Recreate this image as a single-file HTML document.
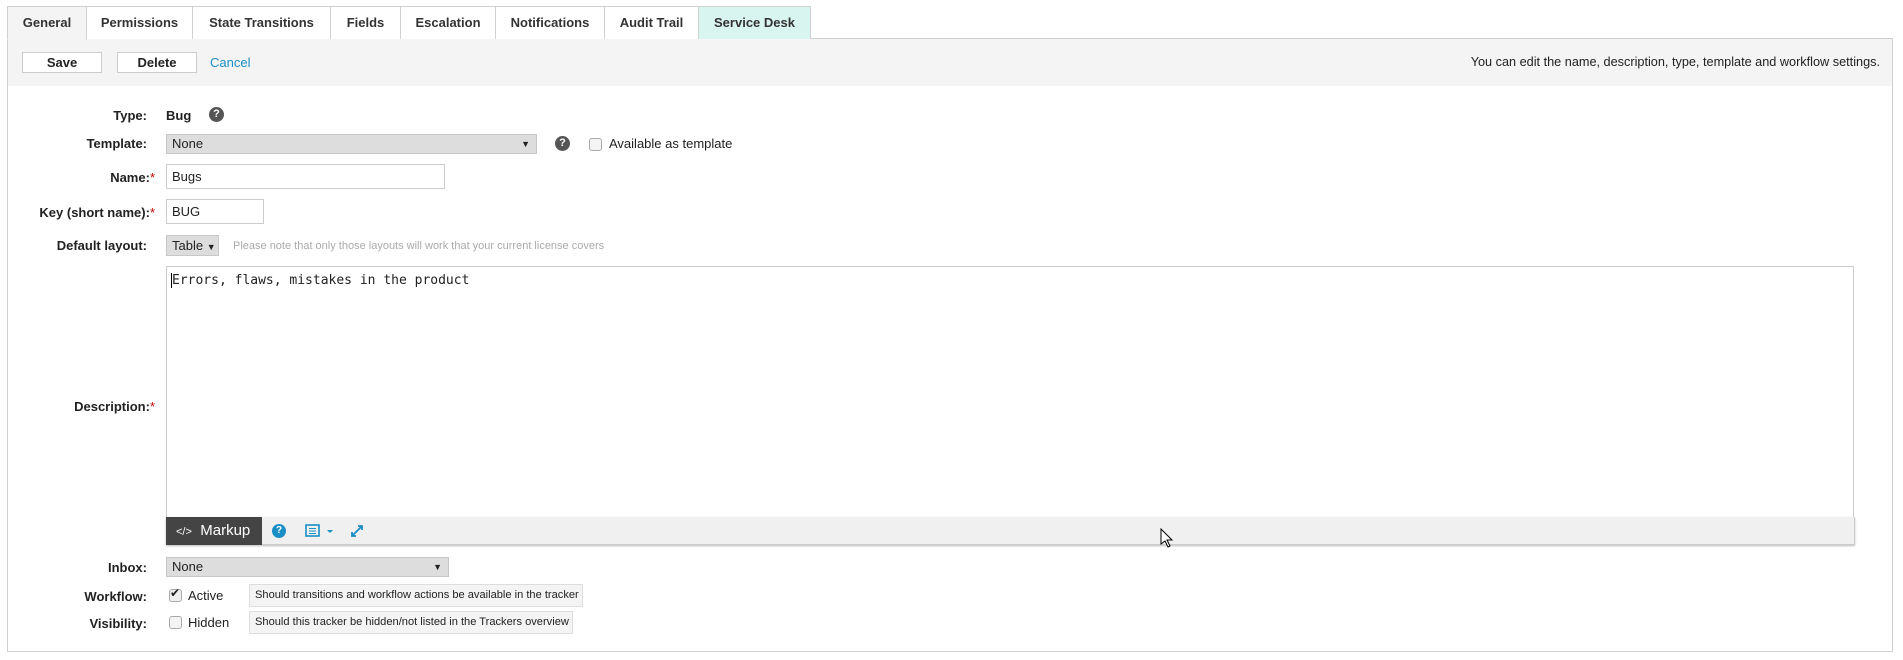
<!DOCTYPE html>
<html><head><meta charset="utf-8"><style>
*{box-sizing:border-box}
body{margin:0;width:1903px;height:660px;background:#fff;font-family:"Liberation Sans",Arial,sans-serif;font-size:13px;color:#222;position:relative;overflow:hidden}
.a{position:absolute}
.tab{position:absolute;top:6px;height:33px;border:1px solid #d0d0d0;border-bottom:none;background:#fff;font-weight:bold;font-size:13px;text-align:center;line-height:31px;color:#333}
.box{position:absolute;left:7px;top:38px;width:1886px;height:614px;border:1px solid #d0d0d0}
.tb{position:absolute;left:8px;top:39px;width:1884px;height:47px;background:#f4f4f4}
.btn{position:absolute;top:52px;height:21px;border:1px solid #ccc;background:#fff;font-weight:bold;text-align:center;line-height:19px}
.lbl{position:absolute;right:1756px;font-weight:bold;white-space:nowrap}
.req{color:#c00;font-weight:normal}
.sel{position:absolute;background:#ddd;border:1px solid #c8c8c8;padding-left:5px}
.inp{position:absolute;border:1px solid #ccc;background:#fff;padding-left:5px}
.help{position:absolute;width:15px;height:15px;border-radius:50%;background:#555;color:#fff;font-size:11px;font-weight:bold;text-align:center;line-height:15px}
.cb{position:absolute;width:13px;height:13px;border:1px solid #aaa;border-radius:3px;background:#f4f4f4}
.hint{position:absolute;left:249px;height:23px;border:1px solid #ddd;background:#f4f4f4;font-size:11.1px;line-height:21px;padding-left:5px;white-space:nowrap}
</style></head><body>
<div class="box"></div>
<div class="tb"></div>
<div class="tab" style="left:7px;width:80px;background:#f4f4f4;border-bottom:1px solid #f4f4f4;height:34px">General</div>
<div class="tab" style="left:86px;width:107px">Permissions</div>
<div class="tab" style="left:192px;width:139px">State Transitions</div>
<div class="tab" style="left:330px;width:71px">Fields</div>
<div class="tab" style="left:400px;width:96px">Escalation</div>
<div class="tab" style="left:495px;width:110px">Notifications</div>
<div class="tab" style="left:604px;width:95px">Audit Trail</div>
<div class="tab" style="left:698px;width:113px;background:#d9f5ef">Service Desk</div>
<div class="btn" style="left:22px;width:80px">Save</div>
<div class="btn" style="left:117px;width:80px">Delete</div>
<div class="a" style="left:210px;top:55px;color:#1a8fc5">Cancel</div>
<div class="a" style="right:23px;top:55px;font-size:12.7px">You can edit the name, description, type, template and workflow settings.</div>

<div class="lbl" style="top:108px">Type:</div>
<div class="a" style="left:166px;top:108px;font-weight:bold">Bug</div>
<div class="help" style="left:209px;top:107px">?</div>

<div class="lbl" style="top:136px">Template:</div>
<div class="sel" style="left:166px;top:134px;width:371px;height:20px;line-height:18px">None<span style="position:absolute;right:6px;font-size:9px">▼</span></div>
<div class="help" style="left:555px;top:136px">?</div>
<div class="cb" style="left:589px;top:138px"></div>
<div class="a" style="left:609px;top:136px">Available as template</div>

<div class="lbl" style="top:170px;right:1748px">Name:<span class="req">*</span></div>
<div class="inp" style="left:166px;top:164px;width:279px;height:25px;line-height:23px">Bugs</div>

<div class="lbl" style="top:205px;right:1748px">Key (short name):<span class="req">*</span></div>
<div class="inp" style="left:166px;top:199px;width:98px;height:25px;line-height:23px">BUG</div>

<div class="lbl" style="top:238px">Default layout:</div>
<div class="sel" style="left:166px;top:235px;width:53px;height:21px;line-height:19px">Table <span style="font-size:9px">▼</span></div>
<div class="a" style="left:233px;top:240px;font-size:11px;color:#aaa">Please note that only those layouts will work that your current license covers</div>

<div class="lbl" style="top:399px;right:1748px">Description:<span class="req">*</span></div>
<div class="a" style="left:166px;top:266px;width:1688px;height:252px;border:1px solid #ccc;background:#fff"></div>
<div class="a" style="left:171px;top:273px;font-family:'DejaVu Sans Mono','Liberation Mono',monospace;font-size:13px"><span style="border-left:1px solid #000"></span>Errors, flaws, mistakes in the product</div>
<div class="a" style="left:166px;top:517px;width:1689px;height:28px;background:#f0f0f0;border:1px solid #ccc;border-top:none;box-shadow:0 1px 2px #bbb"></div>
<div class="a" style="left:166px;top:517px;width:96px;height:28px;background:#444;color:#fff;font-size:15px;line-height:28px;padding-left:10px"><span style="font-size:11px">&lt;/&gt;</span>&nbsp; Markup</div>
<div class="a" style="left:272px;top:524px;width:14px;height:14px;border-radius:50%;background:#1a8fc5;color:#fff;font-size:10px;font-weight:bold;text-align:center;line-height:14px">?</div>
<svg class="a" style="left:305px;top:524px" width="32" height="14"><rect x="1" y="1" width="13" height="11" fill="none" stroke="#1a8fc5" stroke-width="1.6"/><path d="M4 4.5h7M4 7h7M4 9.5h7" stroke="#1a8fc5"/><path d="M22 6h6l-3 3z" fill="#1a8fc5"/></svg>
<svg class="a" style="left:350px;top:524px" width="14" height="14"><path d="M2 12L12 2M8 2h4v4M2 8v4h4" stroke="#1a8fc5" stroke-width="1.8" fill="none"/></svg>
<svg class="a" style="left:1160px;top:528px" width="14" height="20"><path d="M1 1v15l4-3 3 6 2-1-3-6h5z" fill="#fff" stroke="#000"/></svg>

<div class="lbl" style="top:560px">Inbox:</div>
<div class="sel" style="left:166px;top:557px;width:283px;height:20px;line-height:18px">None<span style="position:absolute;right:6px;font-size:9px">▼</span></div>

<div class="lbl" style="top:589px">Workflow:</div>
<div class="cb" style="left:169px;top:589px;background:#eee"></div>
<div class="a" style="left:170px;top:586px;font-size:12px">✔</div>
<div class="a" style="left:188px;top:588px">Active</div>
<div class="hint" style="top:584px;width:334px">Should transitions and workflow actions be available in the tracker</div>

<div class="lbl" style="top:616px">Visibility:</div>
<div class="cb" style="left:169px;top:616px"></div>
<div class="a" style="left:188px;top:615px">Hidden</div>
<div class="hint" style="top:611px;width:324px">Should this tracker be hidden/not listed in the Trackers overview</div>
</body></html>
